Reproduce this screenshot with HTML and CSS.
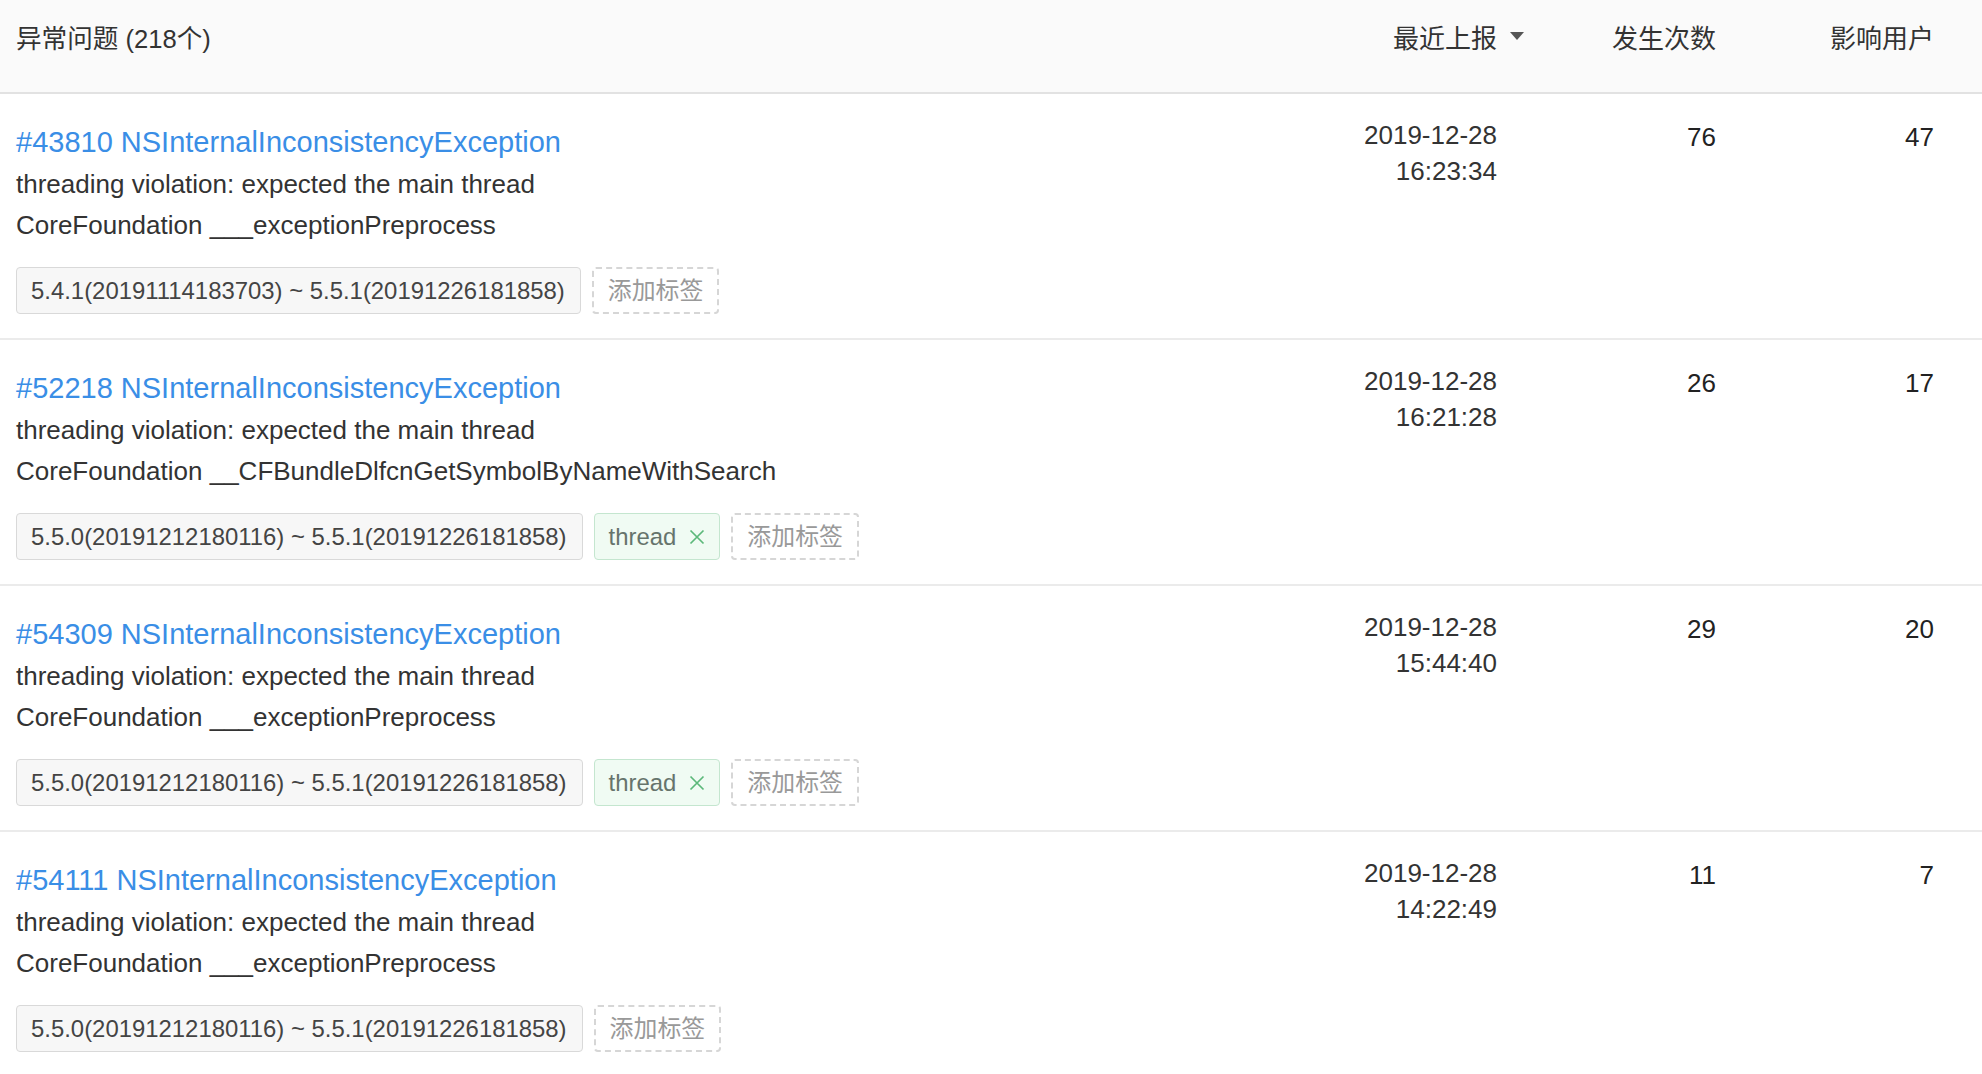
FILE: index.html
```html
<!DOCTYPE html>
<html lang="zh">
<head>
<meta charset="utf-8">
<title>异常问题</title>
<link rel="stylesheet" href="styles.css">
</head>
<body>
<div class="list">
  <div class="head grid">
    <div class="h-title">异常问题 (218个)</div>
    <div class="h-col h-date">最近上报<span class="caret"></span></div>
    <div class="h-col">发生次数</div>
    <div class="h-col">影响用户</div>
  </div>

  <div class="row grid">
    <div class="main">
      <a class="title">#43810 NSInternalInconsistencyException</a>
      <div class="line">threading violation: expected the main thread</div>
      <div class="line">CoreFoundation ___exceptionPreprocess</div>
      <div class="tags">
        <span class="tag ver">5.4.1(20191114183703) ~ 5.5.1(20191226181858)</span>
        <span class="tag add">添加标签</span>
      </div>
    </div>
    <div class="date">2019-12-28<br>16:23:34</div>
    <div class="num">76</div>
    <div class="num">47</div>
  </div>

  <div class="row grid">
    <div class="main">
      <a class="title">#52218 NSInternalInconsistencyException</a>
      <div class="line">threading violation: expected the main thread</div>
      <div class="line">CoreFoundation __CFBundleDlfcnGetSymbolByNameWithSearch</div>
      <div class="tags">
        <span class="tag ver">5.5.0(20191212180116) ~ 5.5.1(20191226181858)</span>
        <span class="tag label">thread<svg class="x" viewBox="0 0 16 16" width="16" height="16"><path d="M1.5 1.5 L14.5 14.5 M14.5 1.5 L1.5 14.5" stroke="currentColor" stroke-width="1.7" fill="none"/></svg></span>
        <span class="tag add">添加标签</span>
      </div>
    </div>
    <div class="date">2019-12-28<br>16:21:28</div>
    <div class="num">26</div>
    <div class="num">17</div>
  </div>

  <div class="row grid">
    <div class="main">
      <a class="title">#54309 NSInternalInconsistencyException</a>
      <div class="line">threading violation: expected the main thread</div>
      <div class="line">CoreFoundation ___exceptionPreprocess</div>
      <div class="tags">
        <span class="tag ver">5.5.0(20191212180116) ~ 5.5.1(20191226181858)</span>
        <span class="tag label">thread<svg class="x" viewBox="0 0 16 16" width="16" height="16"><path d="M1.5 1.5 L14.5 14.5 M14.5 1.5 L1.5 14.5" stroke="currentColor" stroke-width="1.7" fill="none"/></svg></span>
        <span class="tag add">添加标签</span>
      </div>
    </div>
    <div class="date">2019-12-28<br>15:44:40</div>
    <div class="num">29</div>
    <div class="num">20</div>
  </div>

  <div class="row grid">
    <div class="main">
      <a class="title">#54111 NSInternalInconsistencyException</a>
      <div class="line">threading violation: expected the main thread</div>
      <div class="line">CoreFoundation ___exceptionPreprocess</div>
      <div class="tags">
        <span class="tag ver">5.5.0(20191212180116) ~ 5.5.1(20191226181858)</span>
        <span class="tag add">添加标签</span>
      </div>
    </div>
    <div class="date">2019-12-28<br>14:22:49</div>
    <div class="num">11</div>
    <div class="num">7</div>
  </div>
</div>
</body>
</html>
```

FILE: styles.css
```css
html, body {
  margin: 0;
  padding: 0;
  background: #ffffff;
}
body {
  font-family: "Liberation Sans", "Noto Sans CJK SC", sans-serif;
  color: #333333;
  font-size: 26px;
}
.grid {
  display: grid;
  grid-template-columns: 1fr 220px 219px 218px;
  padding: 0 48px 0 16px;
}
.head {
  height: 92px;
  align-items: center;
  background: #fafafa;
  border-bottom: 2px solid #e2e2e2;
  font-size: 26px;
  color: #333;
}
.h-title {
  margin-top: -20px;
  font-size: 25.6px;
}
.h-col {
  text-align: right;
  margin-top: -20px;
}
.h-date {
  position: relative;
}
.caret {
  position: absolute;
  right: -27px;
  top: 14px;
  width: 0;
  height: 0;
  border-left: 7px solid transparent;
  border-right: 7px solid transparent;
  border-top: 8px solid #555;
}
.row {
  padding-top: 27px;
  padding-bottom: 24px;
  border-bottom: 2px solid #ebebeb;
}
.main {
  display: flex;
  flex-direction: column;
  align-items: flex-start;
}
.title {
  font-size: 29px;
  line-height: 43px;
  color: #3a8ee6;
  text-decoration: none;
}
.line {
  font-size: 26px;
  line-height: 41px;
  color: #333;
}
.tags {
  display: flex;
  gap: 11px;
  margin-top: 21px;
}
.tag {
  box-sizing: border-box;
  height: 47px;
  line-height: 45px;
  font-size: 23.9px;
  padding: 0 15px;
  border-radius: 4px;
  display: inline-flex;
  align-items: center;
}
.ver {
  background: #f7f7f7;
  border: 1px solid #d9d9d9;
  color: #444;
  padding: 0 15px 0 14px;
}
.label {
  background: #f0fbf3;
  border: 1px solid #c4e6cf;
  color: #66746c;
  padding: 0 14px;
}
.label .x {
  margin-left: 13px;
  color: #5cb87a;
}
.add {
  border: 2px dashed #d6d6d6;
  color: #999;
  padding: 0 14px;
}
.date {
  text-align: right;
  font-size: 26px;
  line-height: 36px;
  margin-top: -4px;
  color: #333;
}
.num {
  text-align: right;
  font-size: 26px;
  line-height: 36px;
  margin-top: -2px;
  color: #222;
}
```
